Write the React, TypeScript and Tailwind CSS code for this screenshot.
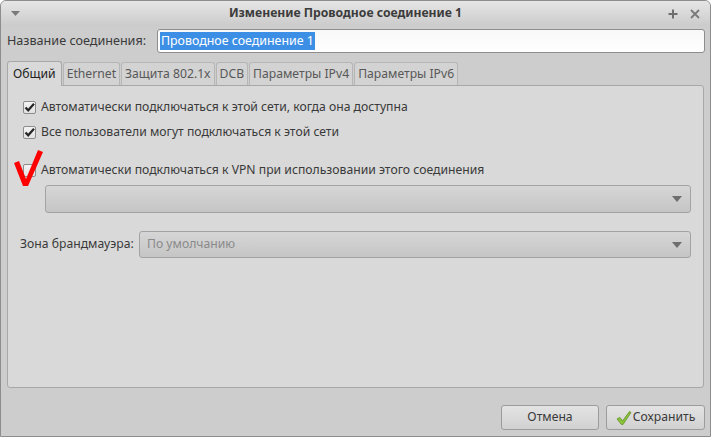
import React from "react";

const font = { fontFamily: '"Noto Sans", "Open Sans", sans-serif' };

function Check({ checked }: { checked: boolean }) {
  return (
    <div className="w-[13px] h-[13px] border border-[#8c8c8c] bg-gradient-to-b from-[#f4f4f4] to-[#e2e2e2] rounded-[2px] relative shrink-0">
      {checked && (
        <svg width="13" height="13" viewBox="0 0 13 13" className="absolute left-[-1px] top-[-1px]">
          <path d="M2.5 6.5 L5.2 9.3 L11 2.8" stroke="#262626" strokeWidth="2.2" fill="none" />
        </svg>
      )}
    </div>
  );
}

function Arrow() {
  return (
    <svg width="10" height="6" viewBox="0 0 10 6">
      <path d="M0 0 H10 L5 6 Z" fill="#6e6e6e" />
    </svg>
  );
}

function Tab({ label, active }: { label: string; active?: boolean }) {
  if (active)
    return (
      <div className="h-[25px] px-[5px] flex items-center border border-b-0 border-[#a8a8a8] rounded-t-[3px] bg-[#d9d9d9] text-[#222222] mb-[-1px] relative z-10">
        {label}
      </div>
    );
  return (
    <div className="h-[23px] px-[3px] flex items-center border border-b-0 border-[#b6b6b6] rounded-t-[3px] bg-[#d3d3d3] text-[#585858]">
      {label}
    </div>
  );
}

export default function App() {
  return (
    <div style={font} className="w-[711px] h-[437px] bg-[#cdcdcd] border border-[#8d8d8d] rounded-t-[6px] flex flex-col text-[12.2px] text-[#3a3a3a] overflow-hidden">
      {/* title bar */}
      <div className="h-[25px] shrink-0 bg-gradient-to-b from-[#e6e6e6] to-[#cbcbcb] grid grid-cols-[1fr_auto_1fr] items-center">
        <div className="pl-[10px] flex items-center">
          <svg width="9" height="5" viewBox="0 0 9 5">
            <path d="M0 0 H9 L4.5 5 Z" fill="#7a7a7a" />
          </svg>
        </div>
        <div className="font-bold text-[#3c3c3c] text-[12.2px] mr-[20px]">Изменение Проводное соединение 1</div>
        <div className="flex justify-end items-center gap-[12px] pr-[10px]">
          <svg width="10" height="10" viewBox="0 0 10 10">
            <path d="M5 0.5 V9.5 M0.5 5 H9.5" stroke="#6e6e6e" strokeWidth="2" />
          </svg>
          <svg width="10" height="10" viewBox="0 0 10 10">
            <path d="M1 1 L9 9 M9 1 L1 9" stroke="#7a7a7a" strokeWidth="1.8" />
          </svg>
        </div>
      </div>

      {/* name row */}
      <div className="mt-[3px] ml-[6px] mr-[5px] flex items-center h-[24px]">
        <div className="w-[150px] shrink-0 text-[12.6px]">Название соединения:</div>
        <div className="flex-1 h-[24px] bg-gradient-to-b from-[#f8f8f8] to-[#ffffff] border border-[#8e8e8e] rounded-[3px] flex items-center pl-[2px]">
          <span className="bg-[#3d8fe6] text-white px-[1px] leading-[18px] text-[12.4px]">Проводное соединение 1</span>
        </div>
      </div>

      {/* tabs */}
      <div className="mt-[8px] ml-[6px] flex items-end gap-[1px] h-[24px]">
        <Tab label="Общий" active />
        <Tab label="Ethernet" />
        <Tab label="Защита 802.1x" />
        <Tab label="DCB" />
        <Tab label="Параметры IPv4" />
        <Tab label="Параметры IPv6" />
      </div>

      {/* panel */}
      <div className="mx-[6px] h-[303px] bg-[#d9d9d9] border border-[#a8a8a8] rounded-b-[3px] rounded-tr-[3px] flex flex-col pl-[15px] pr-[12px]">
        <div className="mt-[13px] flex items-center gap-[5px] h-[16px]">
          <Check checked />
          <span>Автоматически подключаться к этой сети, когда она доступна</span>
        </div>
        <div className="mt-[9px] flex items-center gap-[5px] h-[16px]">
          <Check checked />
          <span>Все пользователи могут подключаться к этой сети</span>
        </div>
        <div className="mt-[22px] flex items-center gap-[5px] h-[16px] relative">
          <Check checked={false} />
          <span>Автоматически подключаться к VPN при использовании этого соединения</span>
          <svg width="30" height="40" viewBox="0 0 30 40" className="absolute left-[-9px] top-[-13px]">
            <path d="M0 14 L5 12 L12 30 L24 1 L29 3 L14 37 L9 37 Z" fill="#ff0000" />
          </svg>
        </div>
        <div className="mt-[7px] ml-[22px] h-[28px] bg-gradient-to-b from-[#d6d6d6] to-[#c5c5c5] border border-[#a3a3a3] rounded-[3px] flex items-center justify-end pr-[8px]">
          <Arrow />
        </div>
        <div className="mt-[18px] flex items-center">
          <span className="ml-[-3px] w-[119px] shrink-0 whitespace-nowrap">Зона брандмауэра:</span>
          <div className="flex-1 h-[27px] bg-gradient-to-b from-[#d6d6d6] to-[#c5c5c5] border border-[#a3a3a3] rounded-[3px] flex items-center justify-between pl-[7px] pr-[8px]">
            <span className="text-[#8a8a8a]">По умолчанию</span>
            <Arrow />
          </div>
        </div>
      </div>

      {/* buttons */}
      <div className="mt-[17px] mr-[5px] flex justify-end gap-[7px]">
        <div className="w-[98px] h-[25px] bg-gradient-to-b from-[#e3e3e3] to-[#d1d1d1] border border-[#9c9c9c] rounded-[3px] flex items-center justify-center text-[#3a3a3a]">
          Отмена
        </div>
        <div className="w-[99px] h-[25px] bg-gradient-to-b from-[#e3e3e3] to-[#d1d1d1] border border-[#9c9c9c] rounded-[3px] flex items-center justify-center text-[#3a3a3a] gap-[1px]">
          <svg width="16" height="16" viewBox="0 0 16 16">
            <path d="M1 9 L4 7.5 L6.5 11 L13.5 1.5 L15 2.5 L7 14.5 L5.5 14.5 Z" fill="#8cc43c" stroke="#5e8f1e" strokeWidth="0.8" />
          </svg>
          <span>Сохранить</span>
        </div>
      </div>
    </div>
  );
}
